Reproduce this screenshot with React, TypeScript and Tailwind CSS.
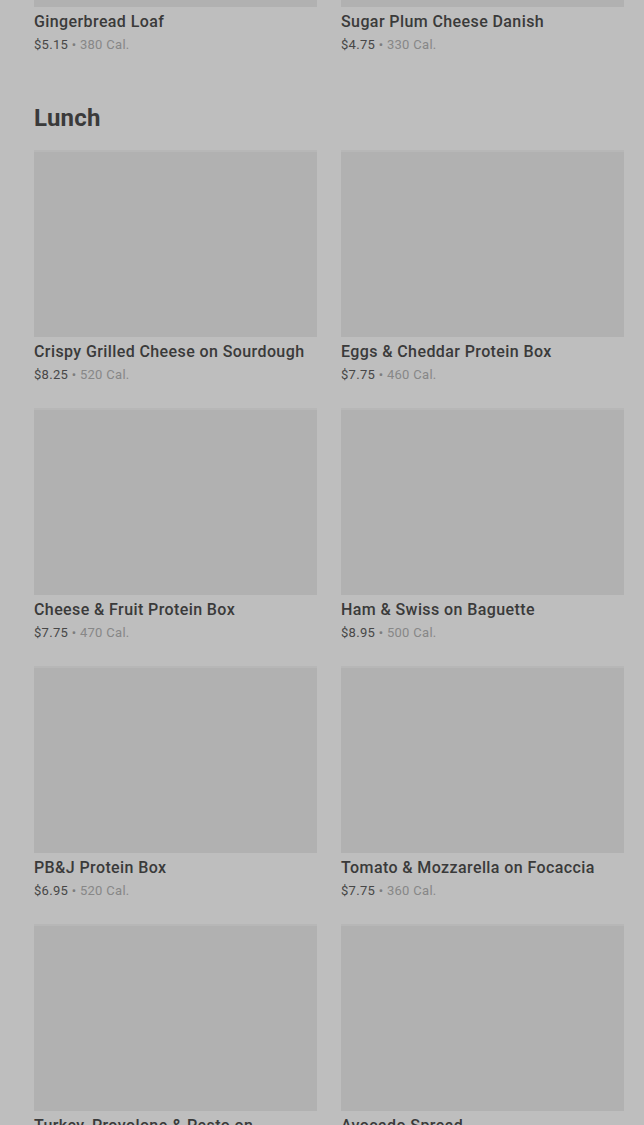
import React from "react";

type Item = { name: string; price: string; cal: string };

const rows: Item[][] = [
  [
    { name: "Crispy Grilled Cheese on Sourdough", price: "$8.25", cal: "520 Cal." },
    { name: "Eggs & Cheddar Protein Box", price: "$7.75", cal: "460 Cal." },
  ],
  [
    { name: "Cheese & Fruit Protein Box", price: "$7.75", cal: "470 Cal." },
    { name: "Ham & Swiss on Baguette", price: "$8.95", cal: "500 Cal." },
  ],
  [
    { name: "PB&J Protein Box", price: "$6.95", cal: "520 Cal." },
    { name: "Tomato & Mozzarella on Focaccia", price: "$7.75", cal: "360 Cal." },
  ],
  [
    { name: "Turkey, Provolone & Pesto on Ciabatta", price: "$9.45", cal: "620 Cal." },
    { name: "Avocado Spread", price: "$1.25", cal: "100 Cal." },
  ],
];

function Info({ item }: { item: Item }) {
  return (
    <div className="mt-[5px]">
      <div className="text-[16px] leading-[20px] font-medium tracking-[0.4px] text-[#3a3a3a]">{item.name}</div>
      <div className="mt-1 text-[13px] leading-[18px] tracking-[0.3px]">
        <span className="text-[#474747]">{item.price}</span>
        <span className="text-[#7d7d7d]"> • </span>
        <span className="text-[#878787]">{item.cal}</span>
      </div>
    </div>
  );
}

function Card({ item }: { item: Item }) {
  return (
    <div className="min-w-0">
      <div className="h-[187px] bg-[#b1b1b1] border-t-2 border-[#b7b7b7]" />
      <Info item={item} />
    </div>
  );
}

export default function App() {
  return (
    <div
      className="w-[644px] h-[1125px] overflow-hidden bg-[#bebebe] pl-[34px] pr-[20px]"
      style={{ fontFamily: "Roboto, 'Noto Sans', Arial, sans-serif" }}
    >
      <div className="grid grid-cols-2 gap-x-[24px]">
        <div className="min-w-0">
          <div className="h-[7px] bg-[#b1b1b1]" />
          <Info item={{ name: "Gingerbread Loaf", price: "$5.15", cal: "380 Cal." }} />
        </div>
        <div className="min-w-0">
          <div className="h-[7px] bg-[#b1b1b1]" />
          <Info item={{ name: "Sugar Plum Cheese Danish", price: "$4.75", cal: "330 Cal." }} />
        </div>
      </div>
      <h2 className="mt-[48px] text-[24px] leading-[32px] font-bold tracking-[0.2px] text-[#3a3a3a]">Lunch</h2>
      <div className="mt-[16px] grid grid-cols-2 gap-x-[24px] gap-y-[24px]">
        {rows.flat().map((it, i) => (
          <Card key={i} item={it} />
        ))}
      </div>
    </div>
  );
}
